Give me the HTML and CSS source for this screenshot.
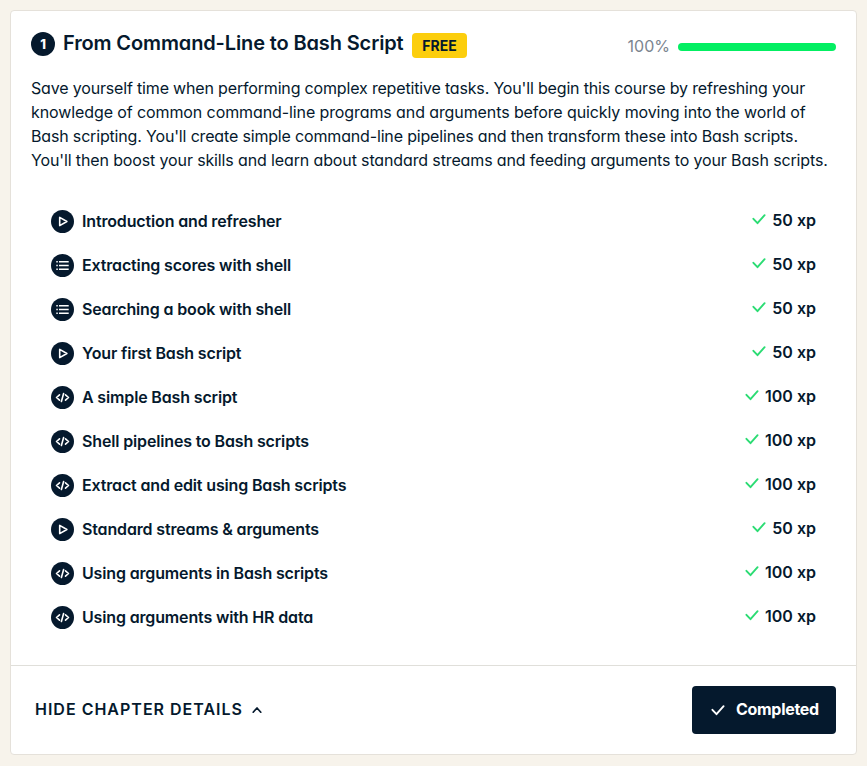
FILE: index.html
```html
<!DOCTYPE html>
<html lang="en">
<head>
<meta charset="utf-8">
<title>From Command-Line to Bash Script</title>
<link rel="stylesheet" href="styles.css">
</head>
<body>
<svg class="sprite" width="0" height="0">
  <symbol id="play" viewBox="0 0 23 23"><circle cx="11.5" cy="11.5" r="11.5" fill="#05192d"/><path d="M8.7 7.4v8.2l7.2-4.1z" fill="none" stroke="#fff" stroke-width="1.6" stroke-linejoin="round"/></symbol>
  <symbol id="list" viewBox="0 0 23 23"><circle cx="11.5" cy="11.5" r="11.5" fill="#05192d"/><path d="M5.3 7.8h1.5M5.3 11.5h1.5M5.3 15.2h1.5M8 7.8h9.7M8 11.5h9.7M8 15.2h9.7" stroke="#fff" stroke-width="1.4"/></symbol>
  <symbol id="code" viewBox="0 0 23 23"><circle cx="11.5" cy="11.5" r="11.5" fill="#05192d"/><path d="M8.5 8.8l-3 2.7 3 2.7M14.5 8.8l3 2.7-3 2.7M12.6 7.5l-2.2 8" fill="none" stroke="#fff" stroke-width="1.6" stroke-linecap="round" stroke-linejoin="round"/></symbol>
  <symbol id="check" viewBox="0 0 14 12"><path d="M1.4 5.8l4.1 4.4 7.1-8" fill="none" stroke="currentColor" stroke-width="1.9" stroke-linecap="round" stroke-linejoin="round"/></symbol>
</svg>
<main class="card">
  <section class="body">
    <header class="head">
      <span class="number">1</span>
      <h1 class="title">From Command-Line to Bash Script</h1>
      <span class="badge">FREE</span>
      <span class="percent">100%</span>
      <span class="bar"></span>
    </header>
    <p class="description">
      <span class="l1">Save yourself time when performing complex repetitive tasks. You'll begin this course by refreshing your</span>
      <span class="l2">knowledge of common command-line programs and arguments before quickly moving into the world of</span>
      <span class="l3">Bash scripting. You'll create simple command-line pipelines and then transform these into Bash scripts.</span>
      <span class="l4">You'll then boost your skills and learn about standard streams and feeding arguments to your Bash scripts.</span>
    </p>
    <ul class="lessons">
      <li><svg class="icon"><use href="#play"/></svg><h2>Introduction and refresher</h2><svg class="check"><use href="#check"/></svg><b>50 xp</b></li>
      <li><svg class="icon"><use href="#list"/></svg><h2>Extracting scores with shell</h2><svg class="check"><use href="#check"/></svg><b>50 xp</b></li>
      <li><svg class="icon"><use href="#list"/></svg><h2>Searching a book with shell</h2><svg class="check"><use href="#check"/></svg><b>50 xp</b></li>
      <li><svg class="icon"><use href="#play"/></svg><h2>Your first Bash script</h2><svg class="check"><use href="#check"/></svg><b>50 xp</b></li>
      <li><svg class="icon"><use href="#code"/></svg><h2>A simple Bash script</h2><svg class="check"><use href="#check"/></svg><b>100 xp</b></li>
      <li><svg class="icon"><use href="#code"/></svg><h2>Shell pipelines to Bash scripts</h2><svg class="check"><use href="#check"/></svg><b>100 xp</b></li>
      <li><svg class="icon"><use href="#code"/></svg><h2>Extract and edit using Bash scripts</h2><svg class="check"><use href="#check"/></svg><b>100 xp</b></li>
      <li><svg class="icon"><use href="#play"/></svg><h2>Standard streams &amp; arguments</h2><svg class="check"><use href="#check"/></svg><b>50 xp</b></li>
      <li><svg class="icon"><use href="#code"/></svg><h2>Using arguments in Bash scripts</h2><svg class="check"><use href="#check"/></svg><b>100 xp</b></li>
      <li><svg class="icon"><use href="#code"/></svg><h2>Using arguments with HR data</h2><svg class="check"><use href="#check"/></svg><b>100 xp</b></li>
    </ul>
  </section>
  <footer class="foot">
    <button class="toggle">HIDE CHAPTER DETAILS<svg class="chevron" viewBox="0 0 10 8"><path d="M1.2 6.2L5 2l3.8 4.2" fill="none" stroke="currentColor" stroke-width="1.7" stroke-linecap="round" stroke-linejoin="round"/></svg></button>
    <button class="completed"><svg class="check"><use href="#check"/></svg><span class="label">Completed</span></button>
  </footer>
</main>
</body>
</html>
```
FILE: styles.css
```css
* { box-sizing: border-box; }
body {
  margin: 0;
  padding: 10px;
  background: #f7f3eb;
  color: #05192d;
  font: 400 16px/24px Inter, "Liberation Sans", sans-serif;
  font-feature-settings: "cv11";
}
.sprite { position: absolute; }
.card {
  display: flex;
  flex-direction: column;
  height: 745px;
  background: #fff;
  border: 1px solid #e5e1da;
  border-radius: 4px;
}
.body { flex: 1; padding: 20px; }
.head { display: flex; align-items: flex-start; height: 29px; }
.number {
  width: 24px;
  height: 24px;
  margin: 1px 8px 0 0;
  border-radius: 50%;
  background: #05192d;
  color: #fff;
  font-size: 13px;
  font-weight: 800;
  text-align: center;
}
.title { margin: 0; font-size: 20px; font-weight: 600; white-space: nowrap; width: 341px; letter-spacing: -0.13px; }
.badge {
  margin: 2px 0 0 8px;
  width: 55px;
  height: 25px;
  border-radius: 4px;
  background: #fcce0d;
  font-size: 14px;
  font-weight: 700;
  line-height: 25px;
  text-align: center;
}
.percent { margin: 3px 8px 0 auto; color: #7b858f; }
.bar { width: 158px; height: 8px; margin-top: 12px; border-radius: 4px; background: #03ef62; }
.description { margin: 16px 0 0; }
.description span { display: block; white-space: nowrap; }
.l1 { letter-spacing: -0.17px; }
.l2 { letter-spacing: -0.1px; }
.l3 { letter-spacing: -0.165px; }
.l4 { letter-spacing: -0.13px; }
.lessons { list-style: none; margin: 27px 20px 0; padding: 0; }
.lessons li { display: flex; align-items: center; height: 44px; }
.icon { width: 23px; height: 23px; }
h2 { margin: 0 auto 0 8px; font-size: 16px; font-weight: 600; line-height: 24px; white-space: nowrap; letter-spacing: -0.15px; }
.lessons b { font-weight: 600; margin: -2px 0 0 6px; }
.check { width: 14px; height: 12px; }
.lessons .check { margin-top: -4px; color: #2bdc73; }
.foot {
  display: flex;
  justify-content: space-between;
  align-items: center;
  height: 89px;
  padding: 0 20px;
  border-top: 1px solid #e0dfda;
}
button {
  display: flex;
  align-items: center;
  border: 0;
  padding: 0;
  background: none;
  color: inherit;
  font: inherit;
  font-feature-settings: inherit;
  font-weight: 600;
}
.toggle { margin: -2px 0 0 4px; letter-spacing: 1px; }
.chevron { width: 10px; height: 8px; margin: 2px 0 0 9px; }
.completed {
  width: 144px;
  height: 48px;
  padding-left: 19px;
  gap: 11px;
  border-radius: 4px;
  background: #05192d;
  color: #fff;
}
.label { margin-top: -2px; font-weight: 700; letter-spacing: -0.3px; }
```
